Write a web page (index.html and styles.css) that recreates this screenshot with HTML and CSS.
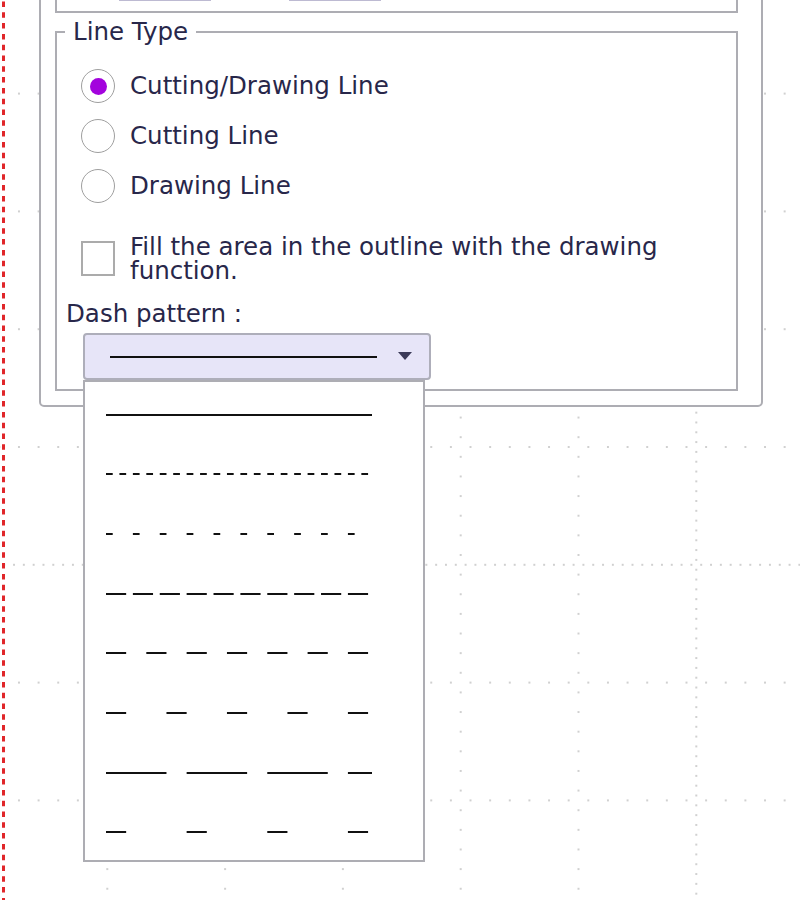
FILE: index.html
```html
<!DOCTYPE html>
<html lang="en">
<head>
<meta charset="utf-8">
<title>Line Type</title>
<link rel="stylesheet" href="styles.css">
</head>
<body>
<svg class="canvas" width="800" height="900" viewBox="0 0 800 900" aria-hidden="true">
  <defs>
    <pattern id="gv" patternUnits="userSpaceOnUse" x="401.8" y="447" width="117.8" height="19.633"><circle cx="58.9" cy="9.817" r="1" fill="#c0c0c0"/></pattern>
    <pattern id="gh" patternUnits="userSpaceOnUse" x="460.7" y="388.1" width="19.633" height="117.8"><circle cx="9.817" cy="58.9" r="1" fill="#c0c0c0"/></pattern>
    <pattern id="mv" patternUnits="userSpaceOnUse" x="694.3" y="447" width="4" height="9.817"><circle cx="2" cy="4.908" r="1" fill="#c0c0c0"/></pattern>
    <pattern id="mh" patternUnits="userSpaceOnUse" x="460.7" y="562.8" width="9.817" height="4"><circle cx="4.908" cy="2" r="1" fill="#c0c0c0"/></pattern>
  </defs>
  <rect x="0" y="0" width="637.4" height="900" fill="url(#gv)"/>
  <rect x="0" y="0" width="800" height="505.9" fill="url(#gh)"/>
  <rect x="0" y="623.7" width="800" height="276.3" fill="url(#gh)"/>
  <rect x="694.3" y="0" width="4" height="900" fill="url(#mv)"/>
  <rect x="0" y="562.8" width="800" height="4" fill="url(#mh)"/>
  <line x1="3.5" y1="0" x2="3.5" y2="900" stroke="#e0262a" stroke-width="3" stroke-dasharray="5.5 5.3" stroke-dashoffset="-1.5"/>
</svg>

<div class="panel">
  <div class="stub">
    <div class="stub-box"></div>
    <div class="stub-box"></div>
  </div>
  <fieldset class="group">
    <legend class="group-title">Line Type</legend>
    <div class="group-body">
      <label class="choice"><span class="radio checked"></span><span>Cutting/Drawing Line</span></label>
      <label class="choice"><span class="radio"></span><span>Cutting Line</span></label>
      <label class="choice"><span class="radio"></span><span>Drawing Line</span></label>
      <label class="fill"><span class="checkbox"></span><span class="fill-text">Fill the area in the outline with the drawing function.</span></label>
      <div class="field-label">Dash pattern :</div>
      <div class="select-wrap">
        <div class="select">
          <svg class="select-line" width="267" height="2"><line x1="0" y1="1" x2="267" y2="1" stroke="#111" stroke-width="2"/></svg>
          <svg class="select-arrow" width="14" height="8"><polygon points="0,0 14,0 7,8" fill="#3b3a58"/></svg>
        </div>
        <ul class="dash-list">
          <li class="dash-item"><svg width="266" height="2"><line x1="0" y1="1" x2="266" y2="1" stroke="#111" stroke-width="2"/></svg></li>
          <li class="dash-item"><svg width="266" height="2"><line x1="0" y1="1" x2="266" y2="1" stroke="#111" stroke-width="2" stroke-dasharray="6.72 6.72"/></svg></li>
          <li class="dash-item"><svg width="266" height="2"><line x1="0" y1="1" x2="266" y2="1" stroke="#111" stroke-width="2" stroke-dasharray="6.72 20.16"/></svg></li>
          <li class="dash-item"><svg width="266" height="2"><line x1="0" y1="1" x2="266" y2="1" stroke="#111" stroke-width="2" stroke-dasharray="20.16 6.72"/></svg></li>
          <li class="dash-item"><svg width="266" height="2"><line x1="0" y1="1" x2="266" y2="1" stroke="#111" stroke-width="2" stroke-dasharray="20.16 20.16"/></svg></li>
          <li class="dash-item"><svg width="266" height="2"><line x1="0" y1="1" x2="266" y2="1" stroke="#111" stroke-width="2" stroke-dasharray="20.16 40.32"/></svg></li>
          <li class="dash-item"><svg width="266" height="2"><line x1="0" y1="1" x2="266" y2="1" stroke="#111" stroke-width="2" stroke-dasharray="60.48 20.16"/></svg></li>
          <li class="dash-item"><svg width="266" height="2"><line x1="0" y1="1" x2="266" y2="1" stroke="#111" stroke-width="2" stroke-dasharray="20.16 60.48"/></svg></li>
        </ul>
      </div>
    </div>
  </fieldset>
</div>
</body>
</html>
```

FILE: styles.css
```css
html, body {
  margin: 0;
  padding: 0;
}

body {
  position: relative;
  width: 800px;
  height: 900px;
  overflow: hidden;
  background: #ffffff;
  font-family: "DejaVu Sans", "Noto Sans", sans-serif;
  color: #28274a;
}

.canvas {
  position: absolute;
  left: 0;
  top: 0;
  display: block;
}

.panel {
  position: relative;
  z-index: 1;
  margin: -40px 0 0 39px;
  width: 724px;
  box-sizing: border-box;
  border: 2px solid #adadb3;
  border-radius: 0 0 5px 5px;
  background: #ffffff;
  padding: 0 0 14px 14px;
}

.stub {
  width: 683px;
  height: 51px;
  box-sizing: border-box;
  border: 2px solid #adadb3;
  border-top: 0;
  display: flex;
  align-items: flex-end;
  gap: 78px;
  padding: 0 0 10px 62px;
}

.stub-box {
  width: 92px;
  height: 30px;
  box-sizing: border-box;
  border: 2px solid #bdbad2;
  background: #ffffff;
}

.group {
  margin: 5px 0 0 0;
  padding: 0;
  width: 683px;
  box-sizing: border-box;
  border: 2px solid #adadb3;
  min-width: 0;
}

.group-title {
  margin-left: 8px;
  padding: 0 8px;
  font-size: 24.5px;
  line-height: 28px;
}

.group-body {
  display: flex;
  flex-direction: column;
  align-items: flex-start;
  padding: 23px 0 9px 0;
}

.choice {
  display: flex;
  align-items: center;
  gap: 15px;
  height: 34px;
  margin-left: 24px;
  font-size: 24.5px;
  line-height: 28px;
}

.choice + .choice {
  margin-top: 16px;
}

.radio {
  flex: none;
  width: 34px;
  height: 34px;
  box-sizing: border-box;
  border: 1.5px solid #9f9f9f;
  border-radius: 50%;
  background: #ffffff;
  display: flex;
  align-items: center;
  justify-content: center;
}

.radio.checked::after {
  content: "";
  width: 17px;
  height: 17px;
  border-radius: 50%;
  background: #a303dd;
}

.fill {
  display: flex;
  align-items: center;
  gap: 15px;
  margin: 31.5px 0 0 24px;
  font-size: 24.5px;
  line-height: 24px;
}

.checkbox {
  flex: none;
  width: 34px;
  height: 35px;
  box-sizing: border-box;
  border: 2px solid #ababab;
  background: #ffffff;
}

.field-label {
  margin: 17px 0 0 9px;
  font-size: 24.5px;
  line-height: 28px;
}

.select-wrap {
  position: relative;
  margin: 5.5px 0 0 26px;
}

.select {
  width: 348px;
  height: 47px;
  box-sizing: border-box;
  border: 2px solid #aeaeba;
  border-radius: 4px;
  background: #e7e5f8;
  display: flex;
  align-items: center;
  padding-left: 25px;
}

.select-line {
  display: block;
}

.select-arrow {
  display: block;
  margin-left: 21px;
  margin-top: -1px;
}

.dash-list {
  position: absolute;
  left: 0;
  top: 47px;
  width: 342px;
  box-sizing: border-box;
  margin: 0;
  padding: 0;
  list-style: none;
  border: 2px solid #adadb3;
  background: #ffffff;
}

.dash-item {
  height: 59.7px;
  box-sizing: border-box;
  padding: 31.5px 0 0 21px;
}

.dash-item svg {
  display: block;
}
```
